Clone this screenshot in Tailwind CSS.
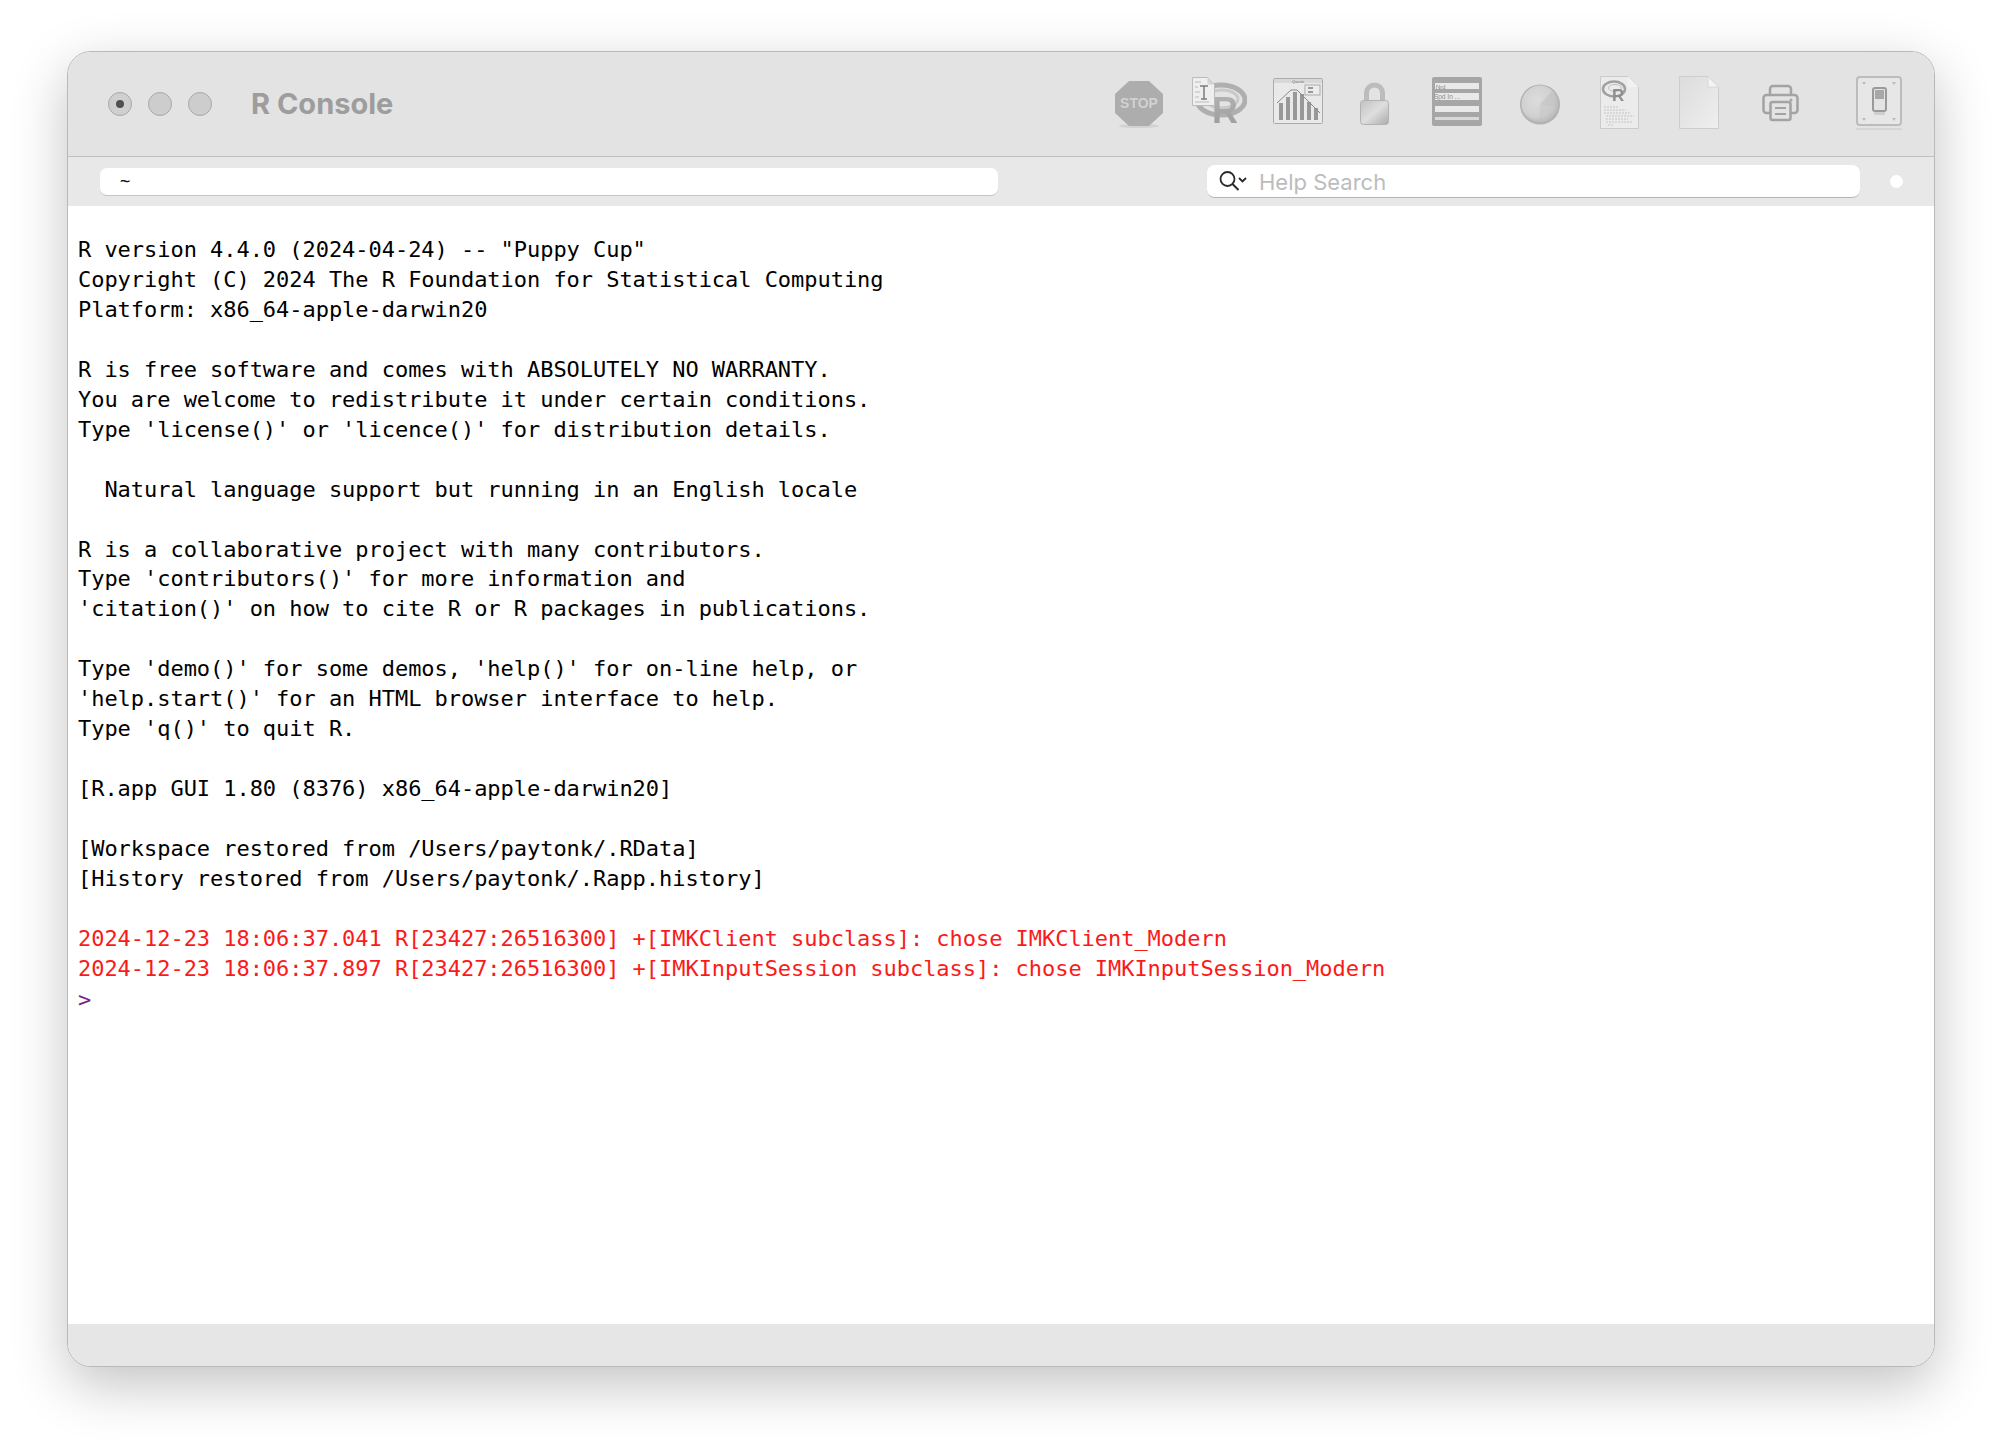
<!DOCTYPE html>
<html>
<head>
<meta charset="utf-8">
<title>R Console</title>
<script src="https://cdn.jsdelivr.net/npm/@tailwindcss/browser@4"></script>
</head>
<body class="bg-white h-[1450px] w-[2002px] overflow-hidden">
<svg width="0" height="0" class="absolute">
  <defs>
    <linearGradient id="lk" x1="0" y1="0" x2="1" y2="1"><stop offset="0" stop-color="#c2c2c2"/><stop offset=".5" stop-color="#dedede"/><stop offset="1" stop-color="#ababab"/></linearGradient>
    <linearGradient id="rg" x1="0" y1="0" x2="0" y2="1"><stop offset="0" stop-color="#b5b5b5"/><stop offset="1" stop-color="#9a9a9a"/></linearGradient>
    <radialGradient id="bl" cx=".42" cy=".4" r=".65"><stop offset="0" stop-color="#dcdcdc"/><stop offset=".7" stop-color="#d0d0d0"/><stop offset="1" stop-color="#b0b0b0"/></radialGradient>
    <linearGradient id="dc" x1="0" y1="0" x2="1" y2="1"><stop offset="0" stop-color="#dcdcdc"/><stop offset="1" stop-color="#efefef"/></linearGradient>
  </defs>
</svg>
<div class="pt-[51px] pl-[67px]">
  <div class="w-[1868px] h-[1316px] flex flex-col rounded-[24px] overflow-hidden border border-[#b9b9b9] bg-white shadow-[0_18px_55px_rgba(0,0,0,0.24)]">
    <!-- title bar -->
    <div class="h-[105px] shrink-0 flex items-center bg-[#e3e3e3] border-b border-[#c1c1c1] pl-[40px] pr-[32px]">
      <div class="flex gap-[16px]">
        <div class="w-[24px] h-[24px] rounded-full bg-[#cfcfcf] border border-[#a9a9a9] flex items-center justify-center"><div class="w-[8px] h-[8px] rounded-full bg-[#505050]"></div></div>
        <div class="w-[24px] h-[24px] rounded-full bg-[#cdcdcd] border border-[#a9a9a9]"></div>
        <div class="w-[24px] h-[24px] rounded-full bg-[#cdcdcd] border border-[#a9a9a9]"></div>
      </div>
      <div class="ml-[39px] text-[29px] leading-[34px] font-bold text-[#9d9d9d] font-['Inter',sans-serif]">R Console</div>
      <div class="ml-auto flex items-center h-[60px] blur-[0.7px]">
        <!-- stop -->
        <svg width="48" height="60" viewBox="0 0 48 60">
          <ellipse cx="24" cy="52" rx="20" ry="2" fill="#d2d2d2"/>
          <polygon points="14,7 34,7 48,20 48,39 34,52 14,52 0,39 0,20" fill="#adadad"/>
          <text x="24" y="34" text-anchor="middle" font-family="Liberation Sans, sans-serif" font-weight="700" font-size="14" fill="#d2d2d2">STOP</text>
        </svg>
        <!-- R + doc -->
        <svg width="55" height="60" viewBox="0 0 55 60" class="ml-[29px]">
          <ellipse cx="29" cy="26" rx="24" ry="15" fill="none" stroke="#afafaf" stroke-width="5"/>
          <ellipse cx="30" cy="25" rx="16" ry="9" fill="none" stroke="#c9c9c9" stroke-width="3"/>
          <text x="20" y="49" font-family="Liberation Sans, sans-serif" font-weight="700" font-size="36" fill="url(#rg)">R</text>
          <path d="M.5 3.500h15l7 7v21H.5z" fill="#efefef" stroke="#bcbcbc"/>
          <path d="M15.500 3.500v7h7" fill="#d4d4d4"/>
          <path d="M8 12h8M12 12v13M9 25h6" stroke="#7c7c7c" stroke-width="1.500" fill="none"/>
          <path d="M3 8h6M3 13h3M3 18h5M3 23h4M3 28h14" stroke="#bbbbbb" stroke-width="1"/>
        </svg>
        <!-- chart -->
        <svg width="50" height="60" viewBox="0 0 50 60" class="ml-[26px]">
          <rect x=".5" y="4.500" width="49" height="45" rx="1" fill="#e9e9e9" stroke="#ababab"/>
          <rect x="1" y="5" width="48" height="4" fill="#d8d8d8"/>
          <text x="25" y="9" text-anchor="middle" font-family="Liberation Sans, sans-serif" font-size="4" fill="#777">Quartz</text>
          <rect x="32" y="11" width="15" height="10" fill="#ececec" stroke="#ababab"/>
          <rect x="35" y="13" width="5" height="2" fill="#999"/><rect x="35" y="17" width="5" height="2" fill="#999"/>
          <path d="M6 46V29h4v17zM13 46V23h4v23zM20 46V18h4v28zM27 46V20h4v26zM34 46V28h4v18zM41 46V34h4v12z" fill="#989898"/>
          <path d="M4 29L18 16h6L47 39" fill="none" stroke="#8a8a8a" stroke-width="1"/>
        </svg>
        <!-- lock -->
        <svg width="29" height="60" viewBox="0 0 29 60" class="ml-[37px]">
          <path d="M6.500 28V19a8 8 0 0 1 16 0V28" fill="none" stroke="#bcbcbc" stroke-width="5"/>
          <rect x=".5" y="26.500" width="28" height="24" rx="3" fill="url(#lk)" stroke="#b2b2b2"/>
        </svg>
        <!-- table -->
        <svg width="50" height="60" viewBox="0 0 50 60" class="ml-[43px]">
          <rect x="0" y="3" width="50" height="49" rx="2" fill="#a6a6a6"/>
          <rect x="3" y="9" width="44" height="6" fill="#e9e9e9"/>
          <rect x="3" y="19" width="44" height="7" fill="#e9e9e9"/>
          <rect x="3" y="32" width="44" height="6" fill="#e9e9e9"/>
          <rect x="3" y="43" width="44" height="3" fill="#d8d8d8"/>
          <text x="4" y="15" font-family="Liberation Sans, sans-serif" font-size="6" fill="#888">Nrd</text>
          <text x="2" y="25" font-family="Liberation Sans, sans-serif" font-size="6.500" fill="#888">Spd In ...</text>
        </svg>
        <!-- ball -->
        <svg width="40" height="60" viewBox="0 0 40 60" class="ml-[38px]">
          <circle cx="20" cy="30.500" r="20" fill="#b2b2b2"/>
          <circle cx="20" cy="30" r="18.500" fill="url(#bl)"/>
          <path d="M20 30.500L32 17A18 18 0 0 1 38 33z" fill="#bcbcbc" opacity=".5"/>
          <path d="M20 30.500L38 33A18 18 0 0 1 19 48z" fill="#c2c2c2" opacity=".4"/>
        </svg>
        <!-- R doc -->
        <svg width="39" height="60" viewBox="0 0 39 60" class="ml-[40px]">
          <path d="M.5 2.500H28L38.500 13V54.500H.5z" fill="#ebebeb" stroke="#cbcbcb"/>
          <path d="M28 2.500V13H38.500z" fill="#f2f2f2"/>
          <ellipse cx="14" cy="15" rx="11" ry="7.500" fill="none" stroke="#a0a0a0" stroke-width="2.500"/>
          <ellipse cx="15" cy="14" rx="6.500" ry="3.500" fill="none" stroke="#bdbdbd" stroke-width="1"/>
          <text x="12" y="27" font-family="Liberation Sans, sans-serif" font-weight="700" font-size="17" fill="#8f8f8f">R</text>
          <path d="M4 33h14M4 36h22M4 39h26M6 42h28M6 45h22M6 48h26M8 51h6" stroke="#bbbbbb" stroke-width=".8" stroke-dasharray="2 1" fill="none"/>
        </svg>
        <!-- doc -->
        <svg width="40" height="60" viewBox="0 0 40 60" class="ml-[40px]">
          <path d="M.5 2.500H29L39.500 13V54.500H.5z" fill="url(#dc)" stroke="#cdcdcd"/>
          <path d="M29 2.500V13H39.500z" fill="#f4f4f4" stroke="#d8d8d8"/>
        </svg>
        <!-- printer -->
        <svg width="37" height="60" viewBox="0 0 37 60" class="ml-[43px]" fill="none" stroke="#a3a3a3" stroke-width="2.500">
          <path d="M8 21V15a3 3 0 0 1 3-3h15a3 3 0 0 1 3 3v6"/>
          <path d="M8 39H4.500a3 3 0 0 1-3-3V24a3 3 0 0 1 3-3h28a3 3 0 0 1 3 3v12a3 3 0 0 1-3 3H29"/>
          <rect x="8.500" y="28" width="20" height="18" rx="2"/>
          <path d="M13 34h11M13 40h11" stroke-width="2"/>
          <circle cx="29" cy="26" r="1.500" fill="#a3a3a3" stroke="none"/>
        </svg>
        <!-- switch -->
        <svg width="46" height="60" viewBox="0 0 46 60" class="ml-[57px]">
          <rect x="0" y="54" width="46" height="2" fill="#d6d6d6"/>
          <rect x="1" y="3" width="44" height="48" rx="3" fill="#e7e7e7" stroke="#bcbcbc" stroke-width="2"/>
          <path d="M6 8h4l-2 3zM36 8h4l-2 3zM6 44h4l-2 3zM36 44h4l-2 3z" fill="#bcbcbc"/>
          <rect x="17" y="14" width="13" height="23" rx="2" fill="#e3e3e3" stroke="#9a9a9a" stroke-width="2"/>
          <rect x="19" y="16" width="9" height="9" fill="#a8a8a8"/>
          <rect x="18" y="38" width="11" height="3" fill="#cfcfcf"/>
        </svg>
      </div>
    </div>
    <!-- path bar -->
    <div class="h-[49px] shrink-0 flex items-center bg-[#e8e8e8] pl-[32px] pr-[31px]">
      <div class="w-[898px] h-[28px] rounded-[7px] bg-white border-b border-[#c4c4c4] flex items-center pl-[20px] pt-[2px] text-[17px] text-[#111] font-['DejaVu_Sans_Mono',monospace]">~</div>
      <div class="ml-[209px] w-[653px] h-[33px] rounded-[8px] bg-white border-b border-[#b4b4b4] flex items-center pl-[11px]">
        <svg width="32" height="24" viewBox="0 0 32 24" fill="none" stroke="#2a2a2a">
          <circle cx="9.500" cy="10" r="7" stroke-width="1.800"/>
          <path d="M14.500 15l6 6" stroke-width="2"/>
          <path d="M21 9l3.500 3.500L28 9" stroke-width="1.800"/>
        </svg>
        <span class="ml-[9px] pt-[1px] text-[22px] leading-[28px] text-[#bcbcbc] font-['Inter',sans-serif]">Help Search</span>
      </div>
      <div class="ml-auto w-[13px] h-[13px] rounded-full bg-white"></div>
    </div>
    <!-- console -->
    <div class="flex-1 bg-white pl-[10px] pt-[29px]">
<pre class="font-['DejaVu_Sans_Mono',monospace] text-[22px] tracking-[-0.04px] leading-[29.95px] text-black">R version 4.4.0 (2024-04-24) -- "Puppy Cup"
Copyright (C) 2024 The R Foundation for Statistical Computing
Platform: x86_64-apple-darwin20

R is free software and comes with ABSOLUTELY NO WARRANTY.
You are welcome to redistribute it under certain conditions.
Type 'license()' or 'licence()' for distribution details.

  Natural language support but running in an English locale

R is a collaborative project with many contributors.
Type 'contributors()' for more information and
'citation()' on how to cite R or R packages in publications.

Type 'demo()' for some demos, 'help()' for on-line help, or
'help.start()' for an HTML browser interface to help.
Type 'q()' to quit R.

[R.app GUI 1.80 (8376) x86_64-apple-darwin20]

[Workspace restored from /Users/paytonk/.RData]
[History restored from /Users/paytonk/.Rapp.history]

<span class="text-[#fb1a1a]">2024-12-23 18:06:37.041 R[23427:26516300] +[IMKClient subclass]: chose IMKClient_Modern
2024-12-23 18:06:37.897 R[23427:26516300] +[IMKInputSession subclass]: chose IMKInputSession_Modern</span></pre>
      <div class="mt-[1px] font-['DejaVu_Sans_Mono',monospace] text-[22px] leading-[30px] text-[#7b1f86]">&gt;</div>
    </div>
    <!-- status bar -->
    <div class="h-[42px] shrink-0 bg-[#e6e6e6]"></div>
  </div>
</div>
</body>
</html>
